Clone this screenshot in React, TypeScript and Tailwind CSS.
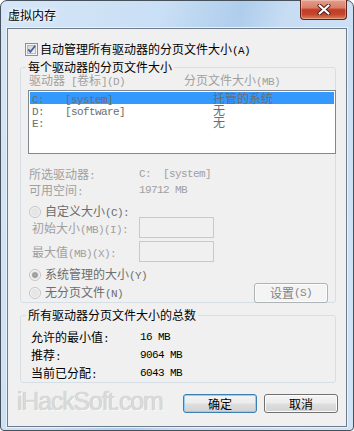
import React from 'react';

const CJK = /([\u3000-\u9fff\uff00-\uffef]+)/;

// SimSun-like mix: CJK in Noto, latin runs in a 6px-wide mono
function T({ s }: { s: string }) {
  return (
    <>
      {s.split(CJK).map((p, i) =>
        !p ? null : CJK.test(p) ? (
          <span key={i}>{p}</span>
        ) : (
          <span
            key={i}
            className="whitespace-pre font-['Liberation_Mono'] text-[11px] tracking-[-0.6px]"
          >
            {p}
          </span>
        )
      )}
    </>
  );
}

function CloseButton() {
  return (
    <div className="-mt-px flex h-[20px] w-[47px] items-center justify-center self-start rounded-b-[4px] border border-t-0 border-[#5e211b] bg-[linear-gradient(#e59d8c_0%,#d9806a_40%,#c23c25_52%,#c4452c_75%,#dc7f57_100%)] shadow-[inset_0_0_0_1px_rgba(255,255,255,0.3)]">
      <svg width="14" height="11" viewBox="0 0 14 11">
        <path d="M2.5 1.5 L11.5 9.5 M11.5 1.5 L2.5 9.5" stroke="#4e1a14" strokeWidth="4" strokeLinecap="round" />
        <path d="M2.5 1.5 L11.5 9.5 M11.5 1.5 L2.5 9.5" stroke="#ffffff" strokeWidth="2.2" strokeLinecap="round" />
      </svg>
    </div>
  );
}

function CheckBox() {
  return (
    <svg width="13" height="13" viewBox="0 0 13 13" className="shrink-0">
      <defs>
        <linearGradient id="cbg" x1="0" y1="0" x2="1" y2="1">
          <stop offset="0" stopColor="#cdd1d6" />
          <stop offset="1" stopColor="#f7f7f7" />
        </linearGradient>
      </defs>
      <rect x="0.5" y="0.5" width="12" height="12" fill="#f4f4f4" stroke="#8e8f8f" />
      <rect x="2.5" y="2.5" width="8" height="8" fill="url(#cbg)" stroke="#b7bbc1" />
      <path d="M3.2 6.3 L5.4 8.9 L10.2 2.8" fill="none" stroke="#4a5f97" strokeWidth="1.8" />
    </svg>
  );
}

function Radio({ on }: { on?: boolean }) {
  return (
    <svg width="12" height="12" viewBox="0 0 12 12" className="shrink-0">
      <circle cx="6" cy="6" r="5.5" fill="#f4f4f4" stroke="#c4c4c4" />
      <circle cx="6" cy="6" r="4" fill="#e6e6e6" />
      {on && <circle cx="6" cy="6" r="2.6" fill="#a3a3a3" stroke="#8c8c8c" strokeWidth="0.6" />}
    </svg>
  );
}

function Btn({ children, primary, disabled }: { children: React.ReactNode; primary?: boolean; disabled?: boolean }) {
  if (disabled)
    return (
      <div className="flex h-[20px] w-[74px] items-center justify-center rounded-[3px] border border-[#adb2b5] bg-[#f4f4f4] leading-[14px] text-[#838383] shadow-[inset_0_0_0_1px_#fcfcfc]">
        {children}
      </div>
    );
  return (
    <div
      className={
        primary
          ? 'flex h-[19px] w-[74px] items-center justify-center rounded-[3px] border border-[#3c7fb1] bg-[linear-gradient(#f4f4f4_0%,#ececec_48%,#dedede_52%,#d3d3d3_100%)] leading-[14px] shadow-[inset_0_0_0_1px_#8fd1f2]'
          : 'flex h-[19px] w-[74px] items-center justify-center rounded-[3px] border border-[#707070] bg-[linear-gradient(#f4f4f4_0%,#ececec_48%,#dedede_52%,#d3d3d3_100%)] leading-[14px] shadow-[inset_0_0_0_1px_#fcfcfc]'
      }
    >
      {children}
    </div>
  );
}

const drives = [
  { d: 'C:', label: '[system]', size: '托管的系统', sel: true },
  { d: 'D:', label: '[software]', size: '无' },
  { d: 'E:', label: '', size: '无' },
];

export default function App() {
  return (
    <div className="h-[431px] w-[354px] bg-white">
      <div className="flex h-[431px] w-[354px] flex-col rounded-t-[7px] rounded-b-[4px] border border-[#47515c] bg-[linear-gradient(105deg,#d6e6f7_0%,#c9dff5_35%,#afcdec_52%,#c8ddf4_62%,#d1e4f7_100%)] font-['Noto_Sans_CJK_SC'] text-[12px] text-black">
        <div className="flex h-[27px] items-center justify-between pl-[7px] pr-[6px]">
          <span className="leading-[14px] [text-shadow:0_0_6px_#ffffff,0_0_3px_#ffffff]">虚拟内存</span>
          <CloseButton />
        </div>

        <div className="mx-[6px] flex h-[399px] flex-col border border-[#6e7c8c] bg-[#f0f0f0] shadow-[0_0_0_1px_#e8f1fb]">
          <div className="mt-[14px] flex h-[13px] items-center pl-[17px]">
            <CheckBox />
            <span className="ml-[2px] leading-[13px]">
              <T s="自动管理所有驱动器的分页文件大小(A)" />
            </span>
          </div>

          <fieldset className="mt-[4px] ml-[12px] h-[243px] w-[316px] rounded-[3px] border border-[#d5dfe5]">
            <legend className="ml-[5px] px-[2px] leading-[14px]">每个驱动器的分页文件大小</legend>
            <div className="flex h-[12px] pl-[8px] leading-[12px] text-[#a0a0a0]">
              <span className="w-[155px]">
                <T s="驱动器 [卷标](D)" />
              </span>
              <span>
                <T s="分页文件大小(MB)" />
              </span>
            </div>

            <div className="mt-[4px] ml-[7px] mr-[-1px] h-[64px] border border-[#828790] bg-white p-px">
              {drives.map((r) => (
                <div
                  key={r.d}
                  className={`flex h-[12px] pl-[2px] leading-[12px] text-[#6d6d6d] ${r.sel ? 'bg-[#3399ff]' : ''}`}
                >
                  <span className="w-[33px]">
                    <T s={r.d} />
                  </span>
                  <span className="w-[148px]">
                    <T s={r.label} />
                  </span>
                  <span>{r.size}</span>
                </div>
              ))}
            </div>

            <div className="mt-[13px] pl-[8px] leading-[14px] text-[#a0a0a0]">
              <div className="flex">
                <span className="w-[110px]">
                  <T s="所选驱动器:" />
                </span>
                <T s="C:  [system]" />
              </div>
              <div className="flex">
                <span className="w-[110px]">
                  <T s="可用空间:" />
                </span>
                <T s="19712 MB" />
              </div>
            </div>

            <div className="mt-[7px] flex h-[11px] items-center pl-[8px]">
              <Radio />
              <span className="ml-[4px] leading-[12px] text-[#6d6d6d]">
                <T s="自定义大小(C):" />
              </span>
            </div>
            <div className="flex h-[21px] items-center">
              <span className="w-[118px] pl-[11px] pt-[2px] leading-[14px] text-[#a0a0a0]">
                <T s="初始大小(MB)(I):" />
              </span>
              <div className="h-[21px] w-[75px] border border-[#c9c9c9] bg-[#f0f0f0]" />
            </div>
            <div className="mt-[3px] flex h-[21px] items-center">
              <span className="w-[118px] pl-[11px] pt-[2px] leading-[14px] text-[#a0a0a0]">
                <T s="最大值(MB)(X):" />
              </span>
              <div className="h-[21px] w-[75px] border border-[#c9c9c9] bg-[#f0f0f0]" />
            </div>

            <div className="mt-[7px] flex h-[12px] items-center pl-[8px]">
              <Radio on />
              <span className="ml-[4px] leading-[12px] text-[#6d6d6d]">
                <T s="系统管理的大小(Y)" />
              </span>
            </div>
            <div className="mt-[2px] flex h-[20px] items-center justify-between pl-[8px] pr-[7px]">
              <div className="flex items-center">
                <Radio />
                <span className="ml-[4px] leading-[12px] text-[#6d6d6d]">
                  <T s="无分页文件(N)" />
                </span>
              </div>
              <Btn disabled>
                <T s="设置(S)" />
              </Btn>
            </div>
          </fieldset>

          <fieldset className="mt-[5px] ml-[12px] h-[75px] w-[316px] rounded-[3px] border border-[#d5dfe5]">
            <legend className="ml-[5px] px-[2px] leading-[14px]">所有驱动器分页文件大小的总数</legend>
            <div className="mt-[7px] pl-[10px] leading-[16px]">
              <div className="flex">
                <span className="w-[109px]">
                  <T s="允许的最小值:" />
                </span>
                <T s="16 MB" />
              </div>
              <div className="flex">
                <span className="w-[109px]">
                  <T s="推荐:" />
                </span>
                <T s="9064 MB" />
              </div>
              <div className="flex">
                <span className="w-[109px]">
                  <T s="当前已分配:" />
                </span>
                <T s="6043 MB" />
              </div>
            </div>
          </fieldset>

          <div className="mt-[11px] flex h-[19px] items-center justify-between pl-[9px] pr-[8px]">
            <span className="mb-[4px] font-['Liberation_Sans'] text-[25px] leading-[19px] tracking-[-1.2px] text-[#dadada] [text-shadow:0_0_1px_#b4b4b4,1px_1px_0_#ffffff]">
              iHackSoft.com
            </span>
            <div className="flex gap-[7px]">
              <Btn primary>确定</Btn>
              <Btn>取消</Btn>
            </div>
          </div>
        </div>
      </div>
    </div>
  );
}
